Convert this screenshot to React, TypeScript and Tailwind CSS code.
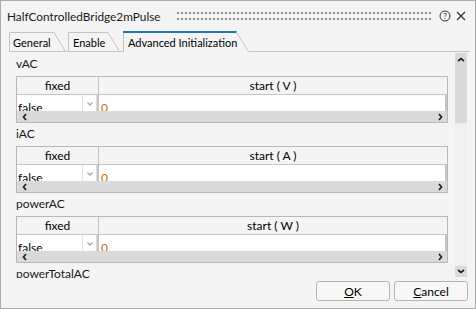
import React from 'react'

type Section = { name: string; unit: string }

const SECTIONS: Section[] = [
  { name: 'vAC', unit: 'V' },
  { name: 'iAC', unit: 'A' },
  { name: 'powerAC', unit: 'W' },
  { name: 'powerTotalAC', unit: '' },
]

function Tab({ label, w, active, className }: { label: string; w: number; active?: boolean; className: string }) {
  return (
    <div className={`relative h-[21px] shrink-0 ${className}`}>
      <svg className="absolute inset-0" width={w} height={21}>
        {active ? (
          <>
            <path d="M0.5 21 V1" stroke="#c2c2c2" fill="none" />
            <rect x={0} y={0} width={w - 12} height={2} fill="#1f78b4" />
            <path d={`M${w - 13} 0.5 L${w - 0.5} 20.5`} stroke="#c2c2c2" fill="none" />
          </>
        ) : (
          <path d={`M0.5 21 V1.5 H${w - 12} L${w - 0.5} 20.5 M0 20.5 H${w}`} stroke="#c2c2c2" fill="none" />
        )}
      </svg>
      <span className="relative block pt-[5px] leading-[14px] text-[11px] text-black whitespace-nowrap">{label}</span>
    </div>
  )
}

function Arrow({ dir }: { dir: 'left' | 'right' | 'up' | 'down' }) {
  const d = {
    left: 'M4 1 L1.5 4 L4 7',
    right: 'M1 1 L3.5 4 L1 7',
    up: 'M1 4 L4 1.5 L7 4',
    down: 'M1 1 L4 3.5 L7 1',
  }[dir]
  const horiz = dir === 'left' || dir === 'right'
  return (
    <svg width={horiz ? 5 : 8} height={horiz ? 8 : 5}>
      <path d={d} stroke="#222" strokeWidth={1.7} fill="none" />
    </svg>
  )
}

function ParamTable({ unit }: { unit: string }) {
  return (
    <div className="w-[432px] h-[47px] border border-[#b8b8b8] flex flex-col overflow-hidden shrink-0">
      {/* header */}
      <div className="flex h-[18px] border-b border-[#c4c4c4] text-[12px] leading-[17px] text-black">
        <div className="w-[82px] border-r border-[#c4c4c4] text-center">fixed</div>
        <div className="flex-1 text-center">start ( {unit} )</div>
      </div>
      {/* row */}
      <div className="flex h-[16px] overflow-hidden text-[12px] leading-[15px]">
        <div className="w-[65px] bg-white pl-[1px] pt-[5px] text-black">false</div>
        <div className="w-[14px] bg-white border-l border-[#e3e3e3] flex justify-center pt-[7px]">
          <svg width={6} height={4}>
            <path d="M0.5 0.5 L3 3 L5.5 0.5" stroke="#a8a8a8" strokeWidth={1.3} fill="none" />
          </svg>
        </div>
        <div className="w-[3px] border-l border-[#dcdcdc] border-r-2 border-r-[#c4c4c4] bg-white" />
        <div className="flex-1 bg-white pl-[2px] pt-[5px] text-[#c96a08] border-r-2 border-[#c4c4c4]">0</div>
      </div>
      {/* horizontal scrollbar */}
      <div className="flex-1 bg-[#dadada] flex items-center justify-between pl-[5px] pr-[4px]">
        <Arrow dir="left" />
        <Arrow dir="right" />
      </div>
    </div>
  )
}

export default function App() {
  return (
    <div className="w-[476px] h-[309px] bg-[#f4f4f4] border border-[#ababab] flex flex-col overflow-hidden font-['Lato',sans-serif]">
      {/* Title bar */}
      <div className="h-[30px] flex items-center pl-[6px] pr-[8px] shrink-0">
        <span className="text-[11.8px] text-[#1a1a1a] pt-[2px]">HalfControlledBridge2mPulse</span>
        <svg className="flex-1 ml-[16px] mr-[6px] h-[10px]">
          <defs>
            <pattern id="grip" width="4" height="6" patternUnits="userSpaceOnUse">
              <rect x="0" y="1" width="2" height="2" fill="#8e8e8e" />
            </pattern>
          </defs>
          <rect x="0" y="0" width="100%" height="10" fill="url(#grip)" />
        </svg>
        <svg width={12} height={12} className="shrink-0">
          <circle cx="6" cy="6" r="5" stroke="#333" strokeWidth={1} fill="none" />
          <text x="6" y="8.8" textAnchor="middle" fontSize="8" fill="#333" fontFamily="Lato, sans-serif">?</text>
        </svg>
        <svg width={12} height={12} className="shrink-0 ml-[4px]">
          <path d="M2 2 L10 10 M10 2 L2 10" stroke="#333" strokeWidth={1.2} />
        </svg>
      </div>

      {/* Tabs */}
      <div className="h-[21px] flex pl-[8px] shrink-0">
        <Tab label="General" w={57} className="w-[57px] pl-[4px]" />
        <div className="w-[2px] h-[21px] border-b border-[#c2c2c2]" />
        <Tab label="Enable" w={52} className="w-[52px] pl-[5px]" />
        <div className="w-[3px] h-[21px] border-b border-[#c2c2c2]" />
        <Tab label="Advanced Initialization" w={126} active className="w-[126px] pl-[5px]" />
        <div className="flex-1 h-[21px] border-b border-[#c2c2c2] mr-[5px]" />
      </div>

      {/* Content */}
      <div className="h-[226px] flex pt-[1px] shrink-0">
        <div className="flex-1 pl-[15px] flex flex-col overflow-hidden">
          {SECTIONS.map((s) => (
            <div key={s.name} className="flex flex-col shrink-0">
              <div className="h-[23px] text-[12px] leading-[22px] text-[#1a1a1a]">{s.name}</div>
              <ParamTable unit={s.unit} />
            </div>
          ))}
        </div>
        <div className="w-[7px]" />
        <div className="w-[12px] flex flex-col mr-[8px]">
          <div className="h-[70px] bg-[#dadada] flex justify-center pt-[4px]">
            <Arrow dir="up" />
          </div>
          <div className="flex-1 bg-[#f0f0f0]" />
          <div className="h-[11px] bg-[#dadada] flex justify-center items-center">
            <Arrow dir="down" />
          </div>
          <div className="h-[1px]" />
        </div>
      </div>

      {/* Footer */}
      <div className="flex-1 flex justify-end items-start pt-[3px] pr-[7px] gap-[4px]">
        <button className="w-[74px] h-[20px] border border-[#b4b4b4] rounded-[3px] bg-[#f7f7f7] text-[12px] leading-[17px] text-black">
          <span className="underline">O</span>K
        </button>
        <button className="w-[74px] h-[20px] border border-[#b4b4b4] rounded-[3px] bg-[#f7f7f7] text-[12px] leading-[17px] text-black">
          <span className="underline">C</span>ancel
        </button>
      </div>
    </div>
  )
}
